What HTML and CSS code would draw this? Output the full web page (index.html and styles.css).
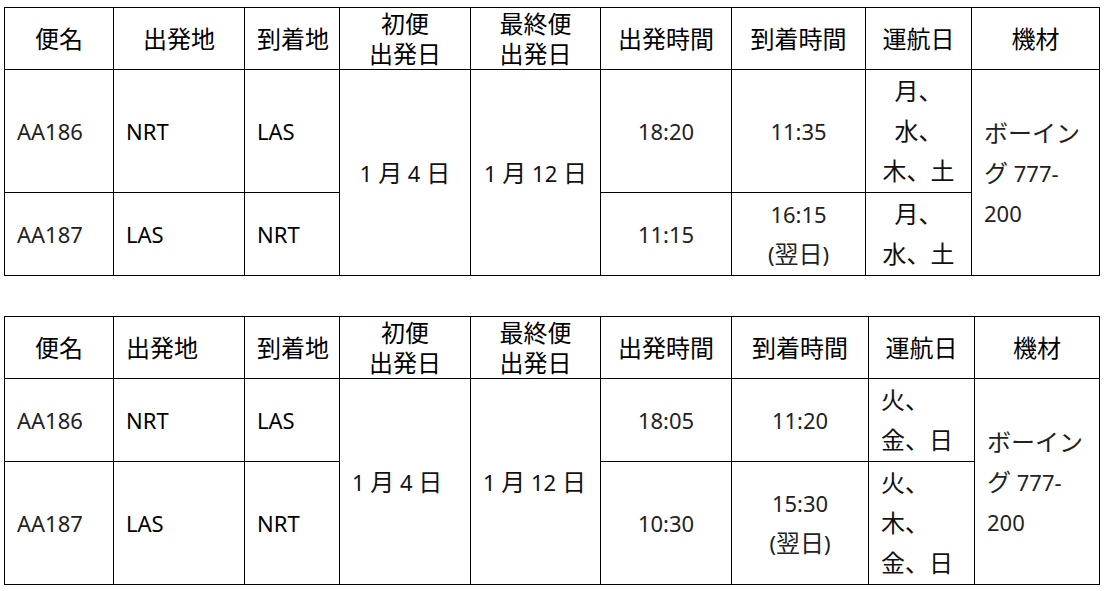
FILE: index.html
```html
<!DOCTYPE html>
<html lang="ja">
<head>
<meta charset="utf-8">
<title>フライトスケジュール</title>
<link rel="stylesheet" href="styles.css">
</head>
<body>
<div class="page">
  <table class="sched t1">
    <colgroup>
      <col class="w1"><col class="w2"><col class="w3"><col class="w4"><col class="w5"><col class="w6"><col class="w7a"><col class="w8"><col class="w9a">
    </colgroup>
    <thead>
      <tr>
        <th>便名</th>
        <th>出発地</th>
        <th>到着地</th>
        <th>初便<br>出発日</th>
        <th>最終便<br>出発日</th>
        <th>出発時間</th>
        <th>到着時間</th>
        <th>運航日</th>
        <th>機材</th>
      </tr>
    </thead>
    <tbody>
      <tr class="tall">
        <td class="num">AA186</td>
        <td class="code">NRT</td>
        <td class="code">LAS</td>
        <td rowspan="2" class="c">1 <span class="jp">月</span> 4 <span class="jp">日</span></td>
        <td rowspan="2" class="c">1 <span class="jp">月</span> 12 <span class="jp">日</span></td>
        <td class="c num">18:20</td>
        <td class="c num">11:35</td>
        <td class="c"><span class="jp">月、<br>水、<br>木、土</span></td>
        <td rowspan="2" class="craft"><span class="jp">ボーイン</span><br><span class="jp">グ</span> 777-<br>200</td>
      </tr>
      <tr class="short">
        <td class="num">AA187</td>
        <td class="code">LAS</td>
        <td class="code">NRT</td>
        <td class="c num">11:15</td>
        <td class="c num">16:15<br>(<span class="jp">翌日</span>)</td>
        <td class="c"><span class="jp">月、<br>水、土</span></td>
      </tr>
    </tbody>
  </table>

  <table class="sched t2">
    <colgroup>
      <col class="w1"><col class="w2"><col class="w3"><col class="w4"><col class="w5"><col class="w6"><col class="w7b"><col class="w8"><col class="w9b">
    </colgroup>
    <thead>
      <tr>
        <th>便名</th>
        <th class="l">出発地</th>
        <th>到着地</th>
        <th>初便<br>出発日</th>
        <th>最終便<br>出発日</th>
        <th>出発時間</th>
        <th>到着時間</th>
        <th>運航日</th>
        <th>機材</th>
      </tr>
    </thead>
    <tbody>
      <tr class="short">
        <td class="num">AA186</td>
        <td class="code">NRT</td>
        <td class="code">LAS</td>
        <td rowspan="2">1 <span class="jp">月</span> 4 <span class="jp">日</span></td>
        <td rowspan="2">1 <span class="jp">月</span> 12 <span class="jp">日</span></td>
        <td class="c num">18:05</td>
        <td class="c num">11:20</td>
        <td><span class="jp">火、<br>金、日</span></td>
        <td rowspan="2" class="craft"><span class="jp">ボーイン</span><br><span class="jp">グ</span> 777-<br>200</td>
      </tr>
      <tr class="tall">
        <td class="num">AA187</td>
        <td class="code">LAS</td>
        <td class="code">NRT</td>
        <td class="c num">10:30</td>
        <td class="c num">15:30<br>(<span class="jp">翌日</span>)</td>
        <td><span class="jp">火、<br>木、<br>金、日</span></td>
      </tr>
    </tbody>
  </table>
</div>
</body>
</html>
```

FILE: styles.css
```css
html, body {
  margin: 0;
  padding: 0;
  background: #ffffff;
}

body {
  font-family: "Noto Sans", "Noto Sans CJK JP", sans-serif;
  font-size: 22px;
  color: #111111;
}

.page {
  display: flex;
  flex-direction: column;
  gap: 40px;
  padding: 7px 0 0 4px;
}

.sched {
  border-collapse: collapse;
  table-layout: fixed;
  width: 1096px;
}

.sched th,
.sched td {
  border: 1px solid #000000;
  padding: 0 12px;
  vertical-align: middle;
  overflow: hidden;
  white-space: nowrap;
}

.sched th {
  font-weight: 400;
  font-size: 24px;
  color: #000000;
  line-height: 30px;
  height: 61px;
  text-align: center;
}

.sched th.l {
  text-align: left;
}

.sched td {
  line-height: 40px;
  text-align: left;
}

.sched td.c {
  text-align: center;
}

.sched td.num {
  color: #222222;
}

.sched td.code {
  color: #000000;
}

.sched td.craft {
  color: #222222;
}

.jp {
  font-size: 24px;
}

.sched tr.tall td {
  height: 122px;
}

.sched tr.short td {
  height: 82px;
}

.w1 { width: 109px; }
.w2 { width: 131px; }
.w3 { width: 95px; }
.w4 { width: 131px; }
.w5 { width: 130px; }
.w6 { width: 131px; }
.w7a { width: 134px; }
.w8 { width: 106px; }
.w9a { width: 128px; }
.w7b { width: 137px; }
.w9b { width: 125px; }
```
